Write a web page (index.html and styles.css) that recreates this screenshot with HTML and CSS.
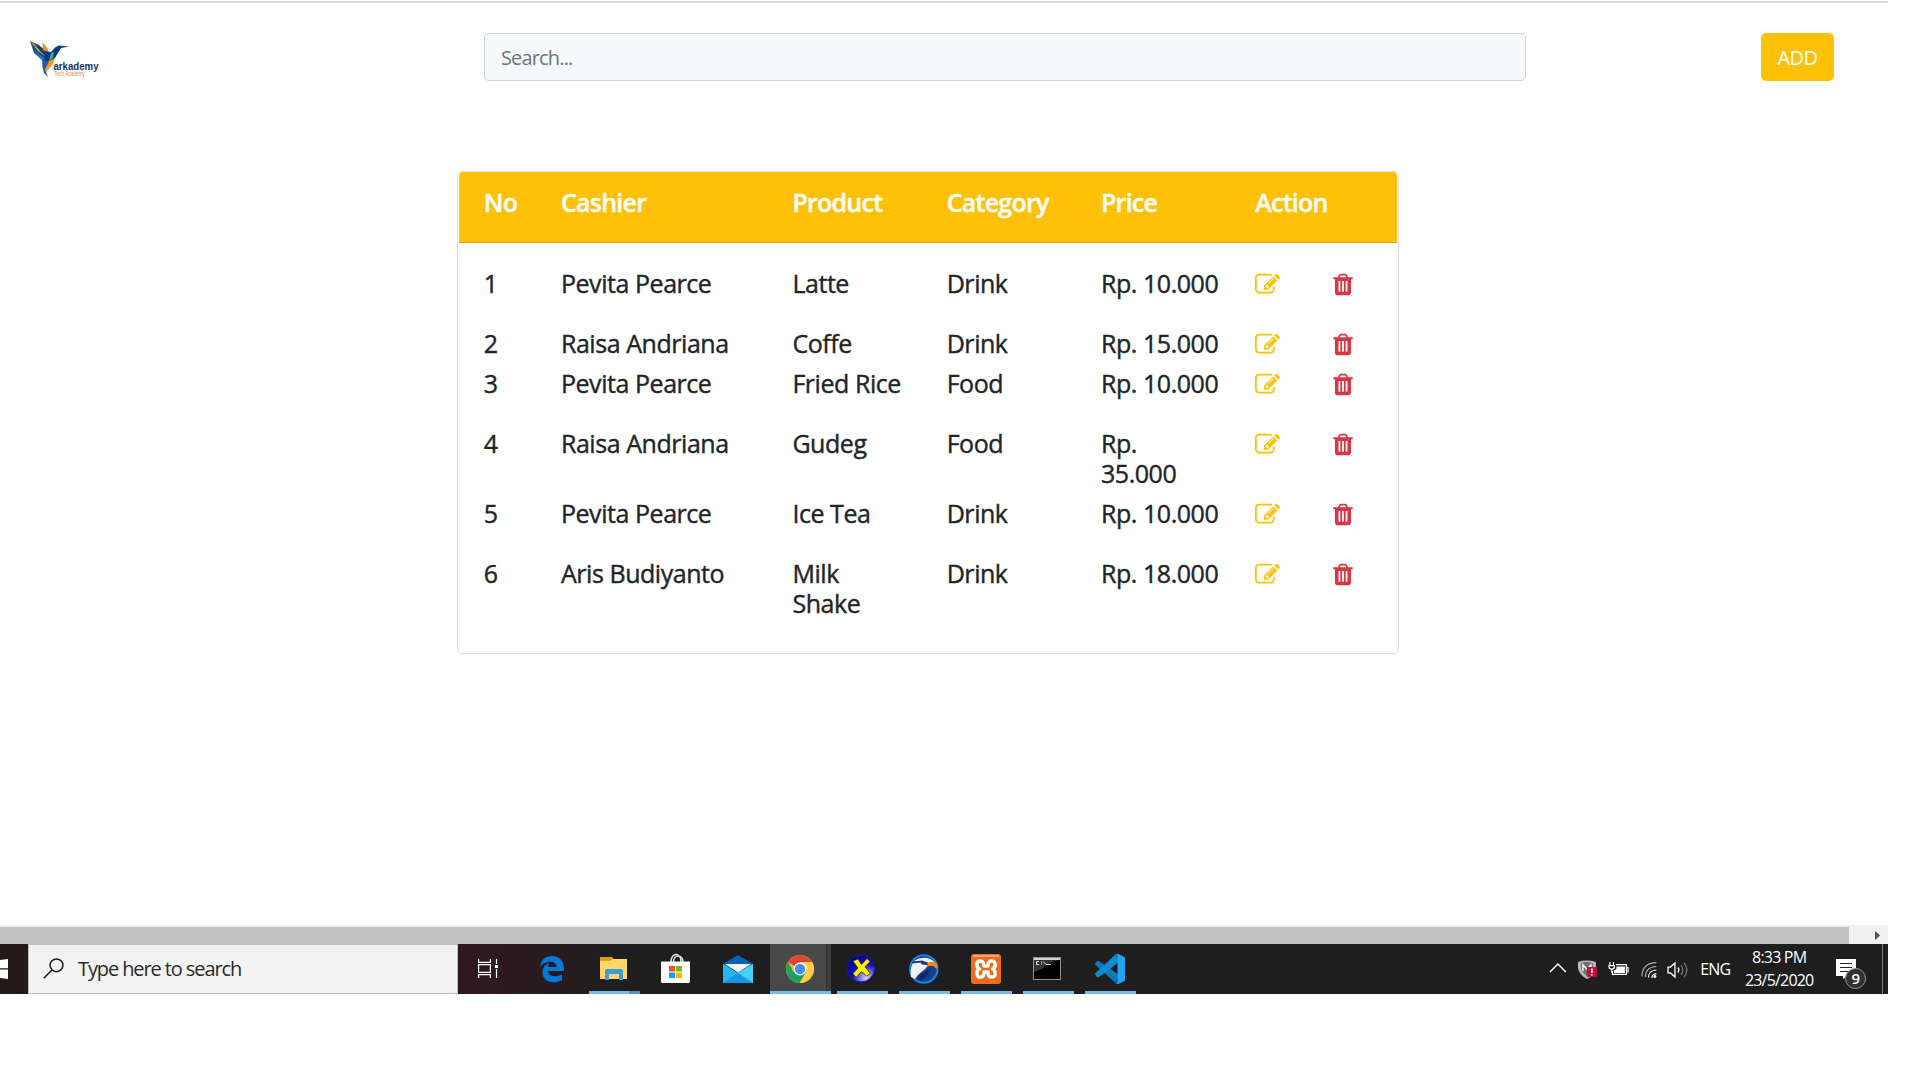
FILE: index.html
```html
<!DOCTYPE html>
<html lang="en">
<head>
<meta charset="utf-8">
<title>Arkademy Cashier</title>
<link rel="stylesheet" href="styles.css">
</head>
<body>
<svg class="defs" width="0" height="0">
  <symbol id="edit" viewBox="0 0 1792 1792"><path d="M888 1184l116-116-152-152-116 116v56h96v96h56zm440-720q-16-16-33 1l-350 350q-17 17-1 33t33-1l350-350q17-17 1-33zm80 594v190q0 119-84.500 203.500t-203.500 84.500h-832q-119 0-203.500-84.500t-84.500-203.500v-832q0-119 84.500-203.500t203.500-84.500h832q63 0 117 25 15 7 18 23 3 17-9 29l-49 49q-14 14-32 8-23-6-45-6h-832q-66 0-113 47t-47 113v832q0 66 47 113t113 47h832q66 0 113-47t47-113v-126q0-13 9-22l64-64q15-15 35-7t20 29zm-96-738l288 288-672 672h-288v-288zm444 132l-92 92-288-288 92-92q28-28 68-28t68 28l152 152q28 28 28 68t-28 68z"/></symbol>
  <symbol id="trash" viewBox="192 0 1408 1792"><path d="M704 1376v-704q0-14-9-23t-23-9h-64q-14 0-23 9t-9 23v704q0 14 9 23t23 9h64q14 0 23-9t9-23zm256 0v-704q0-14-9-23t-23-9h-64q-14 0-23 9t-9 23v704q0 14 9 23t23 9h64q14 0 23-9t9-23zm256 0v-704q0-14-9-23t-23-9h-64q-14 0-23 9t-9 23v704q0 14 9 23t23 9h64q14 0 23-9t9-23zm-544-992h448l-48-117q-7-9-17-11h-317q-10 2-17 11zm928 32v64q0 14-9 23t-23 9h-96v948q0 83-47 143.500t-113 60.500h-832q-66 0-113-58.500t-47-141.500v-952h-96q-14 0-23-9t-9-23v-64q0-14 9-23t23-9h309l70-167q15-37 54-63t79-26h320q40 0 79 26t54 63l70 167h309q14 0 23 9t9 23z"/></symbol>
</svg>
<div class="screen">
  <header class="topbar">
    <svg class="logo" width="72" height="42" viewBox="0 0 72 42">
      <path d="M0 0L9 4L16 10L19 13L20 20L16 23L11 18L4 12Z" fill="#14508c"/>
      <path d="M3 9L12 15L17 22L11 18Z" fill="#1c74c4"/>
      <path d="M1 1L9 6L15 15L8 10Z" fill="#f9a11b"/>
      <path d="M4 3L10 6L17 15L12 12Z" fill="#0d3b78"/>
      <path d="M12.500 1L17 7L19 12L13 9Z" fill="#f58220"/>
      <path d="M14 10L21 11L25 6.500L29 4.500L39 5.500L31 7L28 12L25 17L20 22L15 20Z" fill="#0d3b78"/>
      <path d="M21 12L24 11L23 17L19 20Z" fill="#35a99b"/>
      <path d="M17 21L25 17L23 23L16 31L14 30Z" fill="#f9961e"/>
      <path d="M12 18L19 21L15 28L18 36L14 32L12.500 26Z" fill="#1c5fa8"/>
      <text x="23.500" y="28.500" class="logo-name" textLength="45" lengthAdjust="spacingAndGlyphs">arkademy</text>
      <text x="24" y="35.300" class="logo-tag" textLength="31" lengthAdjust="spacingAndGlyphs">Tech Academy</text>
    </svg>
    <input class="search" type="text" placeholder="Search...">
    <button class="add">ADD</button>
  </header>

  <main class="card">
    <div class="row card-head"><span>No</span><span>Cashier</span><span>Product</span><span>Category</span><span>Price</span><span>Action</span></div>
    <div class="card-body">
      <div class="row spaced"><span>1</span><span>Pevita Pearce</span><span>Latte</span><span>Drink</span><span>Rp. 10.000</span><svg class="edit"><use href="#edit"/></svg><svg class="trash"><use href="#trash"/></svg></div>
      <div class="row"><span>2</span><span>Raisa Andriana</span><span>Coffe</span><span>Drink</span><span>Rp. 15.000</span><svg class="edit"><use href="#edit"/></svg><svg class="trash"><use href="#trash"/></svg></div>
      <div class="row spaced"><span>3</span><span>Pevita Pearce</span><span>Fried Rice</span><span>Food</span><span>Rp. 10.000</span><svg class="edit"><use href="#edit"/></svg><svg class="trash"><use href="#trash"/></svg></div>
      <div class="row"><span>4</span><span>Raisa Andriana</span><span>Gudeg</span><span>Food</span><span>Rp.<br>35.000</span><svg class="edit"><use href="#edit"/></svg><svg class="trash"><use href="#trash"/></svg></div>
      <div class="row spaced"><span>5</span><span>Pevita Pearce</span><span>Ice Tea</span><span>Drink</span><span>Rp. 10.000</span><svg class="edit"><use href="#edit"/></svg><svg class="trash"><use href="#trash"/></svg></div>
      <div class="row"><span>6</span><span>Aris Budiyanto</span><span>Milk<br>Shake</span><span>Drink</span><span>Rp. 18.000</span><svg class="edit"><use href="#edit"/></svg><svg class="trash"><use href="#trash"/></svg></div>
    </div>
  </main>

  <div class="scrollbar"><div class="thumb"></div><svg width="13" height="17" viewBox="0 0 13 17"><path d="M0 4L5 8.500L0 13Z" fill="#505050"/></svg></div>

  <footer class="taskbar">
    <div class="start"><svg width="8" height="20" viewBox="0 0 8 20"><path d="M0 1L8 0V9.300H0ZM0 10.600H8V20L0 19Z" fill="#fff"/></svg></div>
    <div class="task-search">
      <svg width="21" height="21" viewBox="0 0 21 21" fill="none" stroke="#1a1a1a" stroke-width="1.500"><circle cx="13.500" cy="7.300" r="6.400"/><path d="M9 12L.7 20.300"/></svg>
      <span>Type here to search</span>
    </div>
    <nav class="apps">
      <div class="app"><svg width="32" height="32" viewBox="0 0 32 32" fill="none" stroke="#fff" stroke-width="1.200"><path d="M4.600 7V10.400H16.400V7M4.600 12.600H16.400V20.400H4.600ZM4.600 26V22.600H16.400V26M22.500 7V12M22.500 17V26"/><path d="M21 13H24V16H21Z" fill="#fff" stroke="none"/></svg></div>
      <div class="app"><svg width="32" height="32" viewBox="0 0 32 32"><path d="M4 14.500C5 8 9.500 4 16 4C23.500 4 28 9 28 16V19H12C12.500 24.500 20 26 26 22.300V28C17 33 6.500 29.500 6.500 20.500C6.500 15.500 9.500 12.300 13.300 11C12.500 12.200 12 13.500 11.900 15H20.500C20.500 8.500 9.500 7.500 4 14.500Z" fill="#0078d7"/></svg></div>
      <div class="app run split"><svg width="32" height="32" viewBox="0 0 32 32"><path d="M2 5H14L15.500 7H29V26.500H2Z" fill="#f0b429"/><path d="M2 5H14L15 7L12 8.500H2Z" fill="#dd9b00"/><path d="M2 9H13L15 7H29V27H2Z" fill="#ffd766"/><path d="M7 28V19Q7 17 9 17H23Q25 17 25 19V28H21V22H11V28Z" fill="#3e9bdc"/></svg></div>
      <div class="app"><svg width="32" height="32" viewBox="0 0 32 32"><path d="M11 10C11 0 21 0 21 10M13.500 10C13.500 2 23 2 23 10" fill="none" stroke="#ddd" stroke-width="1.600"/><path d="M1 9.500H30V29.500Q30 31 28.500 31H2.500Q1 31 1 29.500Z" fill="#fff"/><path d="M9 14H15V19.500H9Z" fill="#f25022"/><path d="M16 14H22V19.500H16Z" fill="#7fba00"/><path d="M9 20.500H15V26H9Z" fill="#00a4ef"/><path d="M16 20.500H22V26H16Z" fill="#ffb900"/></svg></div>
      <div class="app"><svg width="32" height="32" viewBox="0 0 32 32"><path d="M1 12L16 3L31 12V16H1Z" fill="#0563b0"/><path d="M1 12L16 21L31 12V31H1Z" fill="#27b4f0"/><path d="M3 12H29L16 20.500Z" fill="#f4f4f4"/><path d="M31 12V31L14 21.500Z" fill="#49cdfa"/><path d="M1 31L16 21L31 31Z" fill="#1797e0"/></svg></div>
      <div class="app run active"><svg width="32" height="32" viewBox="0 0 32 32"><circle cx="16" cy="17" r="14" fill="#e8b92b"/><path d="M16 17L3.900 10A14 14 0 0 1 28.100 10H16Z" fill="#dc4437"/><path d="M3.900 10A14 14 0 0 0 15.500 31L22 20.500L16 17L10 20.500Z" fill="#1fa15d"/><path d="M28.100 10H16L22 20.500L15.500 31A14 14 0 0 0 28.100 10Z" fill="#ffce44"/><circle cx="16" cy="17" r="6.500" fill="#fff"/><circle cx="16" cy="17" r="5.200" fill="#4b8bf4"/></svg></div>
      <div class="app run"><svg width="32" height="32" viewBox="0 0 32 32"><defs><radialGradient id="ball" cx=".7" cy=".85" r=".8"><stop offset="0" stop-color="#d4d4fa"/><stop offset=".35" stop-color="#6a6ae0"/><stop offset=".65" stop-color="#0c0cc0"/><stop offset="1" stop-color="#04048a"/></radialGradient></defs><circle cx="15" cy="16.500" r="13.500" fill="url(#ball)" stroke="#1717c8"/><path d="M7 9L12 7L15.500 12.500L21 6.500L24 9.500L19 15L24.500 21.500L20.500 24L15.500 19.500L10 25.500L7 21.500L12 16Z" fill="#ffee00" stroke="#333300" stroke-width=".8"/></svg></div>
      <div class="app run"><svg width="32" height="32" viewBox="0 0 32 32"><circle cx="15.800" cy="17" r="13.700" fill="#173d92" stroke="#1683ea" stroke-width="2"/><path d="M3 25C1.500 15 5 8 11 6.500C17 4.500 24 6 27 11L19 14.500C17 19 11 20 7 27Z" fill="#f1f3f5"/><path d="M19 10.500L26 9.500Q31.500 12 28.500 17L25.500 14L18.500 14Z" fill="#f58a18"/><path d="M4.500 11.500V9.500L14 8.500L19.500 10.500V13L14 12.500L12.500 10.500Z" fill="#1b357b"/><path d="M9 28Q14 19 23 17Q20 24 13 29Z" fill="#0d2a6d"/></svg></div>
      <div class="app run"><svg width="32" height="32" viewBox="0 0 32 32"><rect x="1" y="2" width="30" height="30" rx="3" fill="#ef6c1d"/><path d="M3 3H29V5H3Z" fill="#f7a775"/><path d="M10 9Q6 9 7 13Q7 16 9.500 17Q6.500 18 7 21Q7 26 11 25Q14 25 14 20H18Q18 25 21 25Q26 25 25 21Q25 18 22.500 17Q26 15 25 12Q25 9 21 9Q18 9 18 14H14Q14 9 10 9Z" fill="none" stroke="#fff" stroke-width="3.400" stroke-linejoin="round"/></svg></div>
      <div class="app run"><svg width="32" height="32" viewBox="0 0 32 32"><rect x="1.500" y="5.500" width="27" height="22" fill="#000" stroke="#8b9298"/><path d="M2 6H28V8H2Z" fill="#cfd5d9"/><path d="M2 8H27Q18 9 10 17L2 20Z" fill="#343434"/><path d="M7 9.500H4.500V12.500H7M9 10H10M9 12H10M11 9.500L14 12.500M14 12.500H19" fill="none" stroke="#ddd" stroke-width="1"/></svg></div>
      <div class="app run"><svg width="32" height="32" viewBox="0 0 32 32"><path d="M3 9L1.300 11Q.6 12 1.500 13L22 31.500L25 23L5 9Q4 8.400 3 9Z" fill="#0879bd"/><path d="M1.500 21Q.6 22 1.300 23L3 25Q4 25.600 5 25L25 10L22 2Z" fill="#0b8bd2"/><path d="M22 2Q23.500 1.600 25 2.300L30 4.700Q31 5.200 31 6.500V27.500Q31 28.700 30 29.300L25 31.700Q23.500 32.400 22 31.500L23.500 30V4Z" fill="#26a3ee"/></svg></div>
    </nav>
    <div class="tray">
      <svg class="chevron" width="18" height="12" viewBox="0 0 18 12"><path d="M1 10L9 2L17 10" fill="none" stroke="#fff" stroke-width="1.400"/></svg>
      <svg class="shield" width="22" height="22" viewBox="0 0 22 22"><path d="M1 3Q10 0 19 3V10Q18 17 10 20Q2 16 1 9Z" fill="#b9b9b9"/><path d="M4 4Q10 2 16 4V10Q15 15 10 17Q5 14 4 9Z" fill="#6e6e6e"/><path d="M6 12V6L10 10L14 6V9" fill="none" stroke="#eee" stroke-width="1.600"/><path d="M10 8H20V18H10Z" fill="#c40c36"/><path d="M15 9.500V14M15 15.200V16.700" stroke="#fff" stroke-width="1.500"/></svg>
      <svg class="battery" width="21" height="16" viewBox="0 0 21 16"><path d="M2 0V3M5.500 0V3M1 3.500H6.500V5Q6.500 7 3.800 7Q1 7 1 5ZM3.800 7V11" fill="none" stroke="#fff" stroke-width="1.200"/><path d="M8 2.600H18.500V12.500H4.500V9M19 5.500H20.200V10H19" fill="none" stroke="#fff" stroke-width="1.200"/><path d="M8.500 4.500H17V11H6V8.500L8.500 7Z" fill="#fff"/></svg>
      <svg class="wifi" width="18" height="18" viewBox="0 0 18 18" fill="none" stroke="#fff" stroke-width="1.200"><g stroke="#aaa"><path d="M1 15.500Q1 2 15.500 1.500M4.500 16Q4.500 6 15.500 5.500"/></g><path d="M7.500 16.500Q7.500 9.500 15.500 9M11 17Q11 13 15.500 12.700"/><circle cx="14" cy="15.500" r="1.500" fill="#fff" stroke="none"/></svg>
      <svg class="sound" width="22" height="18" viewBox="0 0 22 18" fill="none" stroke="#fff" stroke-width="1.300"><path d="M1 6H3.500L8 2V16L3.500 12H1Z"/><path d="M11 6.500Q13 9 11 11.500"/><path d="M14 4Q18 9 14 14M17 1.500Q23 9 17 16.500" stroke="#777"/></svg>
      <span class="lang">ENG</span>
      <div class="clock"><span>8:33 PM</span><span>23/5/2020</span></div>
      <div class="notice"><svg width="21" height="21" viewBox="0 0 21 21"><path d="M0 0H20V17H11L7 20V17H0Z" fill="#fff"/><path d="M4 4.500H16M4 8.500H16M4 12.500H12" stroke="#222" stroke-width="1.200"/></svg><b>9</b></div>
      <div class="peek"></div>
    </div>
  </footer>
</div>
</body>
</html>
```
FILE: styles.css
```css
* { box-sizing: border-box; }
body { margin: 0; background: #fff; color: #212529; font-family: "Open Sans", "Noto Sans", sans-serif; }
.defs { display: block; height: 0; }
.screen { width: 1888px; height: 993px; margin-top: 1px; border-top: 2px solid #dadce0; display: flex; flex-direction: column; background: #fff; }
.topbar { display: flex; align-items: flex-start; padding: 30px 54px 0 30px; height: 168px; }
.logo { display: block; margin: 8px 382px 0 0; overflow: visible; }
.logo-name { font: bold 11px "Liberation Sans", sans-serif; fill: #14315f; }
.logo-tag { font: 6.500px "Liberation Sans", sans-serif; fill: #f08a3c; }
.search { width: 1042px; height: 48px; padding: 0 16px; border: 1px solid #ced4da; border-radius: 5px; background: #f8f9fa; font: 20px "Open Sans", sans-serif; letter-spacing: -.85px; }
.search::placeholder { color: #6c757d; opacity: 1; }
.add { width: 73px; height: 48px; margin-left: auto; padding: 0; border: 0; border-radius: 5px; background: #ffc107; color: #fff; font: 20px "Open Sans", sans-serif; letter-spacing: -.5px; }

.card { width: 942px; height: 483px; margin-left: 457px; border: 1px solid #dfdfdf; border-radius: 5px; padding: 0 1px; flex: none; }
.row { display: grid; grid-template-columns: 77.150px 231.450px repeat(3, 154.300px) 77.800px 20px; padding: 0 0 10px 24.800px; font-size: 25px; line-height: 30px; letter-spacing: -.45px; white-space: nowrap; -webkit-text-stroke: .4px currentColor; }
.row.spaced { padding-bottom: 30px; }
.row.card-head { padding: 15px 0 25px 24.800px; border-bottom: 1px solid #dfa800; border-radius: 4px 4px 0 0; background: #ffc107; color: #fff; font-weight: 600; letter-spacing: -.75px; }
.card-body { padding-top: 25px; }
.edit, .trash { height: 25px; margin-top: 3.500px; stroke: none; }
.edit { width: 25px; fill: #ffc107; }
.trash { width: 20px; fill: #dc3545; }

.scrollbar { display: flex; align-items: stretch; justify-content: space-between; height: 19px; margin-top: auto; padding-top: 2px; background: #f0f0f0; }
.thumb { width: 1849px; background: #c1c1c1; }

.taskbar { display: flex; height: 50px; background: linear-gradient(90deg, #231a1a 0, #2f1820 458px, #2c1920 510px, #1e1e1e 610px); color: #fff; flex: none; }
.start { width: 28px; display: flex; align-items: center; }
.task-search { width: 430px; display: flex; align-items: center; gap: 14px; padding: 0 14px 1px; border: 1px solid #bdbdbd; background: #f2f2f2; color: #2b2b2b; font-size: 20px; letter-spacing: -1.100px; white-space: nowrap; }
.apps { display: flex; padding-left: 1px; }
.app { width: 62px; height: 50px; display: flex; flex-direction: column; align-items: center; padding-top: 8px; }
.run::after { content: ""; width: 51px; height: 3px; margin-top: auto; background: #76b9ed; }
.split::after { background: linear-gradient(90deg, #76b9ed 40px, #5d8fba 40px); }
.active { background: linear-gradient(90deg, #1e1e1e 1px, #484848 1px, #484848 57px, #2d2d2d 57px, #2d2d2d 58px, #3c3c3c 58px); }
.active::after { width: 61px; align-self: flex-end; }

.tray { display: flex; margin-left: auto; align-items: flex-start; font-size: 16px; width: 339px; }
.chevron { margin: 18px 10px 0 0; }
.shield { margin: 15px 9px 0 0; }
.battery { margin: 18px 12px 0 0; }
.wifi { margin: 17px 9px 0 0; }
.sound { margin: 17px 11px 0 0; }
.lang { width: 36px; line-height: 50px; letter-spacing: -.8px; }
.clock { width: 87px; display: flex; flex-direction: column; align-items: center; padding-top: 2px; line-height: 23px; letter-spacing: -.8px; }
.notice { position: relative; width: 46px; margin: 15px 0 0 14px; }
.notice svg { display: block; }
.notice b { position: absolute; left: 9px; top: 9px; width: 21px; height: 21px; border: 1px solid #999; border-radius: 50%; background: #303030; text-align: center; font: 600 15px/19px "Open Sans", sans-serif; }
.peek { width: 1px; height: 50px; margin-left: auto; margin-right: 5px; background: #777; }
```
